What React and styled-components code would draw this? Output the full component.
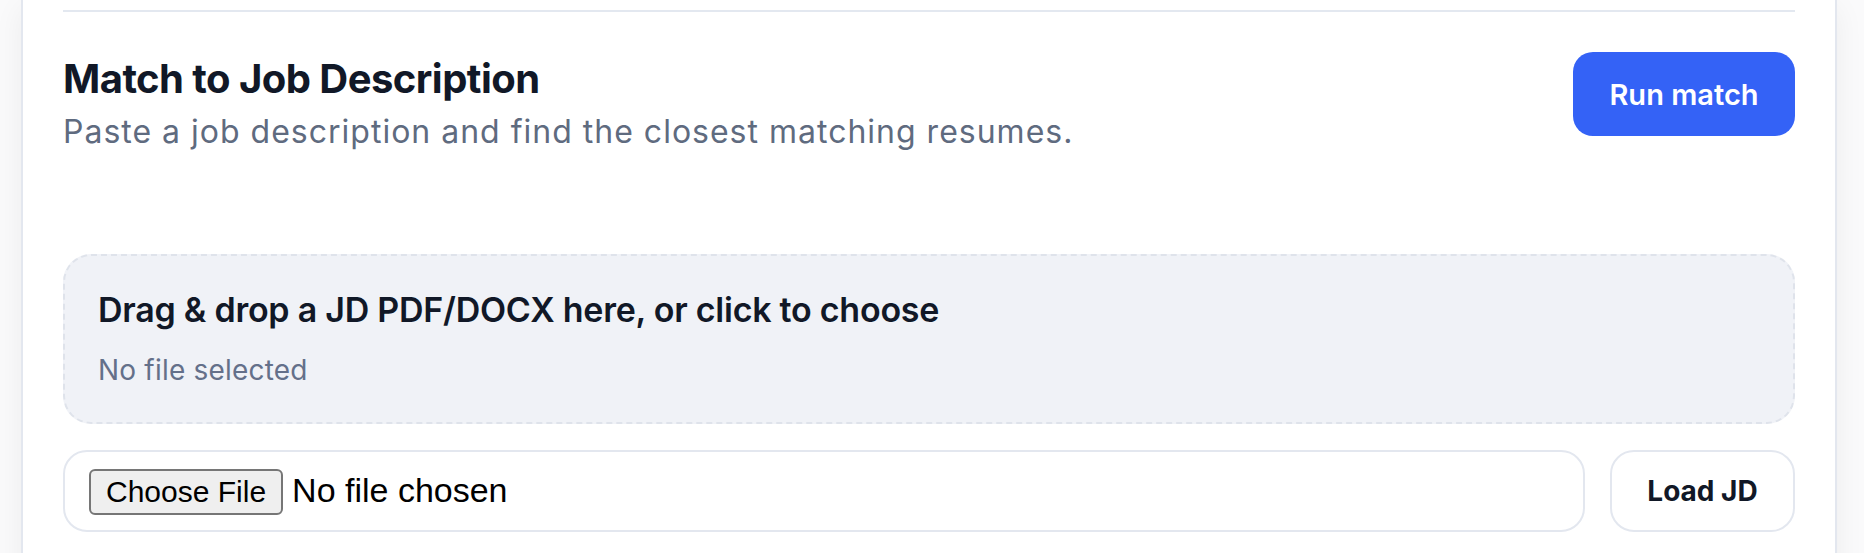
import React from 'react';
import styled, { createGlobalStyle } from 'styled-components';

const GlobalStyle = createGlobalStyle`
  html, body {
    margin: 0;
    padding: 0;
    background: #fafafb;
  }
  body {
    font-family: Inter, "Noto Sans", sans-serif;
    color: #111827;
  }
`;

const Page = styled.div`
  padding: 0 27px 0 21px;
  overflow: hidden;
  height: 553px;
`;

const Card = styled.section`
  background: #ffffff;
  border: 2px solid #e3e7ef;
  border-top: none;
  box-shadow: 0 8px 28px rgba(15, 23, 42, 0.06);
  padding: 10px 40px 40px;
  min-height: 600px;
`;

const Divider = styled.hr`
  margin: 0;
  border: none;
  height: 2px;
  background: #e3e8f0;
`;

const Header = styled.div`
  display: flex;
  justify-content: space-between;
  align-items: flex-start;
  margin-top: 40px;
`;

const Heading = styled.div`
  display: flex;
  flex-direction: column;
  padding-top: 3px;
`;

const Title = styled.h2`
  margin: 0;
  font-size: 40px;
  line-height: 48px;
  font-weight: 700;
  letter-spacing: -0.55px;
  color: #111827;
`;

const Subtitle = styled.p`
  margin: 5px 0 0;
  font-size: 32px;
  line-height: 48px;
  font-weight: 400;
  letter-spacing: 1px;
  color: #5f6b7f;
`;

const PrimaryButton = styled.button`
  width: 222px;
  height: 84px;
  border: none;
  border-radius: 20px;
  background: #3462f6;
  color: #ffffff;
  font-family: inherit;
  font-size: 29px;
  font-weight: 600;
  cursor: pointer;
`;

const DropZone = styled.div`
  margin-top: 98px;
  height: 170px;
  box-sizing: border-box;
  padding: 32px 33px;
  border: 2px dashed #dfe3eb;
  border-radius: 28px;
  background: #f0f2f7;
  cursor: pointer;
`;

const DropTitle = styled.div`
  font-size: 34px;
  line-height: 44px;
  font-weight: 600;
  letter-spacing: -0.25px;
  color: #111827;
`;

const DropHint = styled.div`
  margin-top: 18px;
  font-size: 28px;
  line-height: 40px;
  color: #64708a;
  letter-spacing: 0.2px;
`;

const UploadRow = styled.div`
  display: grid;
  grid-template-columns: 1fr 185px;
  gap: 25px;
  margin-top: 26px;
`;

const FileBox = styled.label`
  display: flex;
  align-items: center;
  height: 82px;
  box-sizing: border-box;
  padding: 2px 24px 0;
  border: 2px solid #e3e7ef;
  border-radius: 24px;
  background: #ffffff;
`;

const FileInput = styled.input`
  font-family: "Liberation Sans", Arial, sans-serif;
  font-size: 34px;
  color: #000000;

  &::file-selector-button {
    font-family: "Liberation Sans", Arial, sans-serif;
    font-size: 30px;
    height: 46px;
    padding: 0 15px;
    margin-right: 9px;
    border: 2px solid #767676;
    border-radius: 6px;
    background: #efefef;
    color: #000000;
  }
`;

const SecondaryButton = styled.button`
  height: 82px;
  border: 2px solid #e3e7ef;
  border-radius: 24px;
  background: #ffffff;
  color: #111827;
  font-family: inherit;
  font-size: 28px;
  font-weight: 700;
  cursor: pointer;
`;

export default function App() {
  return (
    <>
      <GlobalStyle />
      <Page>
        <Card>
          <Divider />
          <Header>
            <Heading>
              <Title>Match to Job Description</Title>
              <Subtitle>Paste a job description and find the closest matching resumes.</Subtitle>
            </Heading>
            <PrimaryButton>Run match</PrimaryButton>
          </Header>
          <DropZone>
            <DropTitle>Drag &amp; drop a JD PDF/DOCX here, or click to choose</DropTitle>
            <DropHint>No file selected</DropHint>
          </DropZone>
          <UploadRow>
            <FileBox>
              <FileInput type="file" accept=".pdf,.docx" />
            </FileBox>
            <SecondaryButton>Load JD</SecondaryButton>
          </UploadRow>
        </Card>
      </Page>
    </>
  );
}
